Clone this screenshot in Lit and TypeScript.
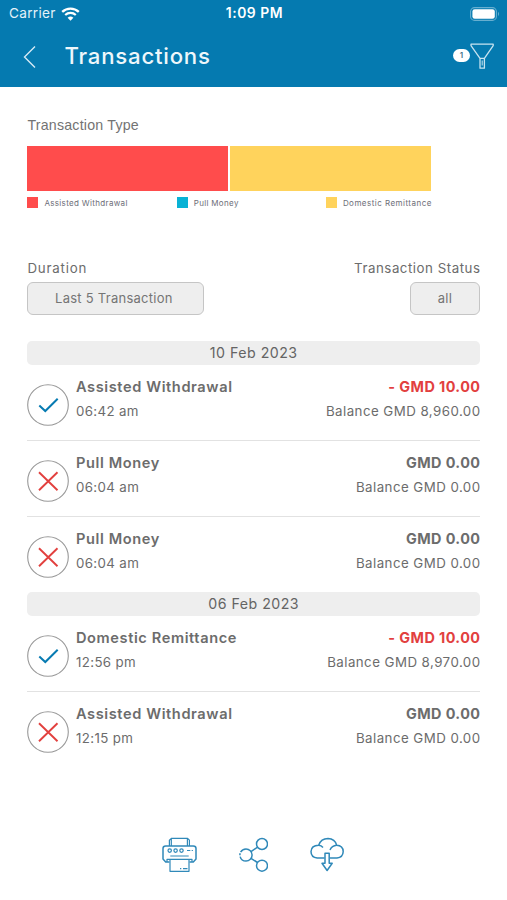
import { LitElement, html, css, svg } from "lit";
import { customElement, property } from "lit/decorators.js";
import { classMap } from "lit/directives/class-map.js";

interface Transaction {
  name: string;
  time: string;
  amount: string;
  balance: string;
  ok: boolean;
}

interface Day {
  date: string;
  items: Transaction[];
}

const DAYS: Day[] = [
  {
    date: "10 Feb 2023",
    items: [
      { name: "Assisted Withdrawal", time: "06:42 am", amount: "- GMD 10.00", balance: "Balance GMD 8,960.00", ok: true },
      { name: "Pull Money", time: "06:04 am", amount: "GMD 0.00", balance: "Balance GMD 0.00", ok: false },
      { name: "Pull Money", time: "06:04 am", amount: "GMD 0.00", balance: "Balance GMD 0.00", ok: false },
    ],
  },
  {
    date: "06 Feb 2023",
    items: [
      { name: "Domestic Remittance", time: "12:56 pm", amount: "- GMD 10.00", balance: "Balance GMD 8,970.00", ok: true },
      { name: "Assisted Withdrawal", time: "12:15 pm", amount: "GMD 0.00", balance: "Balance GMD 0.00", ok: false },
    ],
  },
];

@customElement("app-header")
class AppHeader extends LitElement {
  static styles = css`
    :host { display: flex; flex-direction: column; height: 86.5px; background: #057ab0; color: #fff; }
    svg { display: block; fill: none; flex: none; }
    .status { display: grid; grid-template-columns: 1fr auto 1fr; align-items: center; height: 27px; padding: 0 7px 0 9px; font-size: 13.6px; line-height: 27px; }
    .carrier { display: flex; align-items: center; gap: 5.5px; letter-spacing: 0.3px; color: #e4f2f9; }
    .clock { font-weight: 600; font-size: 13.9px; letter-spacing: 0.55px; }
    .battery { justify-self: end; }
    .bar { display: flex; align-items: center; height: 59px; padding: 0 13px 0 23px; }
    .title { flex: 1; margin: -1px 0 0 27.5px; font-size: 22.2px; font-weight: 500; line-height: 30px; letter-spacing: 0.78px; color: #eef7fb; }
    .badge { box-sizing: border-box; width: 17px; height: 13px; margin-top: -2px; border-radius: 7px; background: #fff; color: #42708a; font-size: 8px; line-height: 13px; text-align: center; font-weight: 600; }
  `;
  render() {
    return html`
      <div class="status">
        <span class="carrier">Carrier
          <svg width="19" height="14" viewBox="0 0 19 14">
            <path d="M1.2 4.9a12 12 0 0 1 16.6 0" stroke="#fff" stroke-width="2.3" />
            <path d="M4.2 8a7.7 7.7 0 0 1 10.6 0" stroke="#fff" stroke-width="2.2" />
            <path d="M6.6 10.7a4.3 4.3 0 0 1 5.8 0L9.5 13.7z" fill="#fff" />
          </svg>
        </span>
        <span class="clock">1:09 PM</span>
        <svg class="battery" width="30" height="14" viewBox="0 0 30 14">
          <rect x=".6" y=".6" width="25.8" height="12.8" rx="4" stroke="#67afd0" stroke-width="1.1" />
          <rect x="2.4" y="2.3" width="22.4" height="9.4" rx="2.3" fill="#fff" />
          <path d="M28 4.8q2 2.2 0 4.4z" fill="#67afd0" />
        </svg>
      </div>
      <div class="bar">
        <svg width="14" height="24" viewBox="0 0 14 24"><path d="M12 1.5 1.5 12 12 22.5" stroke="#d5eaf5" stroke-width="1.4" /></svg>
        <h1 class="title">Transactions</h1>
        <span class="badge">1</span>
        <svg width="24" height="27" viewBox="0 0 24 27" stroke="#c7e3f0" stroke-width="1.3" stroke-linejoin="round">
          <path d="M1 1.2H23.2V2.6L14.4 15.3V25.2H10V15.3L1 2.6zM10 15.4h4.4" />
          <path d="M12.2 17.5v5" stroke-width="1" />
        </svg>
      </div>
    `;
  }
}

@customElement("type-chart")
class TypeChart extends LitElement {
  static styles = css`
    :host { display: block; width: 405px; }
    .heading { margin: 0; font: 400 14.2px/18px "Liberation Sans", Arial, sans-serif; letter-spacing: 0.22px; color: #737373; }
    .bars { display: flex; gap: 2px; height: 45px; margin-top: 11.5px; width: 404px; }
    .bar { flex: 1; }
    .red { background: #ff4c4c; }
    .cyan { background: #09b2d5; }
    .yellow { background: #ffd35c; }
    .legend { display: grid; grid-template-columns: 149.3px 149.2px auto; margin-top: 6.5px; }
    .key { display: flex; align-items: center; gap: 6px; height: 11px; font-size: 8px; color: #6d6e78; white-space: nowrap; letter-spacing: 0.33px; }
    .key:last-child { letter-spacing: 0.47px; }
    .swatch { width: 11px; height: 11px; }
  `;
  render() {
    const keys = [["red", "Assisted Withdrawal"], ["cyan", "Pull Money"], ["yellow", "Domestic Remittance"]];
    return html`
      <h2 class="heading">Transaction Type</h2>
      <div class="bars"><div class="bar red"></div><div class="bar yellow"></div></div>
      <div class="legend">
        ${keys.map(([c, label]) => html`<span class="key"><i class="swatch ${c}"></i>${label}</span>`)}
      </div>
    `;
  }
}

@customElement("transaction-row")
class TransactionRow extends LitElement {
  @property({ attribute: false }) item!: Transaction;
  @property({ type: Boolean }) last = false;

  static styles = css`
    :host { display: block; }
    .row { box-sizing: border-box; display: flex; height: 76px; border-bottom: 1px solid #e2e2e2; }
    .row.last { height: 75px; border-bottom: 0; }
    .mark { display: block; flex: none; margin: 19px 6.6px 0 0; fill: none; }
    .text { display: flex; flex: 1; flex-direction: column; padding-top: 10px; white-space: nowrap; }
    .end { align-items: flex-end; }
    .name, .amount { font-size: 14.6px; line-height: 24px; font-weight: 600; color: #6c6c6c; letter-spacing: 0.6px; }
    .amount { font-weight: 700; font-size: 14.4px; letter-spacing: 0.42px; margin-right: -0.4px; }
    .debit { color: #e2403e; }
    .time, .balance { font-size: 13.3px; line-height: 24px; color: #6c6c6c; letter-spacing: 0.36px; }
    .balance { letter-spacing: 0.45px; margin-right: -0.5px; }
  `;
  render() {
    const { name, time, amount, balance, ok } = this.item;
    return html`
      <div class=${classMap({ row: true, last: this.last })}>
        <svg class="mark" width="42" height="42" viewBox="0 0 42 42">
          <circle cx="21" cy="21" r="20.3" stroke="#999" stroke-width="1.1" />
          ${ok
            ? svg`<path d="M12.3 21.4l6 5.6L30.7 14.8" stroke="#077bb2" stroke-width="2" />`
            : svg`<path d="M12 12.2 30.5 30.2M30.5 12.2 12 30.2" stroke="#e2403e" stroke-width="1.9" />`}
        </svg>
        <div class="text"><span class="name">${name}</span><span class="time">${time}</span></div>
        <div class="text end">
          <span class=${classMap({ amount: true, debit: amount.startsWith("-") })}>${amount}</span>
          <span class="balance">${balance}</span>
        </div>
      </div>
    `;
  }
}

@customElement("action-bar")
class ActionBar extends LitElement {
  static styles = css`
    :host { display: flex; justify-content: center; align-items: center; gap: 41.5px; height: 36px; padding-right: 2px; }
    svg { display: block; fill: none; stroke: #3089b9; stroke-width: 1.5; stroke-linejoin: round; }
    .thin { stroke-width: 1.2; }
  `;
  render() {
    return html`
      <svg width="35" height="36" viewBox="0 0 35 36">
        <path d="M7.4 9V3.2L9.6 1.3H25.6L27.4 3.2V9M9.3 1.5V9M25.4 1.5V9" class="thin" />
        <path d="M7.5 25H3.7L1 22V11.5Q1 9 3.7 9H31.3Q34 9 34 11.5V22L31.3 25H27.5" />
        <path d="M5 25V22.3H30V25M8 22.5V34.3H27V22.5" class="thin" />
        <g class="thin"><circle cx="7.7" cy="13.6" r="1.7" /><circle cx="13.6" cy="13.6" r="1.7" /><circle cx="19.5" cy="13.6" r="1.7" />
        <path d="M25 13.5h3.3M29.7 13.5h1.2M8.3 19H26.7M18 31.7h1.3M21 31.7h4.5" /></g>
      </svg>
      <svg width="30" height="36" viewBox="0 0 30 36">
        <circle cx="8" cy="18" r="6.1" stroke-dasharray="17 1.5 2 1.2 20" /><circle cx="24" cy="7" r="5.5" /><circle cx="24" cy="28.7" r="5.5" />
        <path d="M13 14.6 19.5 10.2M13 21.3 19.5 25.5" />
      </svg>
      <svg width="34" height="36" viewBox="0 0 34 36">
        <path d="M14.6 21H7.2Q1 20.3 1 14.5 1.3 8.3 8.7 8.2 11 1.6 18 1.6 25 2 26.7 8.3 33 8.6 33.2 14.5 33 20.5 27 21H20" />
        <path d="M8.7 8.2Q11.3 8.5 13 10.4M20 13Q21.8 8.8 26.7 8.3" />
        <path d="M15 16.2H19.2V26.3H22.2L17.1 33.5 12 26.3H15z" />
      </svg>
    `;
  }
}

@customElement("app-root")
class AppRoot extends LitElement {
  static styles = css`
    :host { display: flex; flex-direction: column; height: 900px; overflow: hidden; background: #fff; font-family: Inter, "Open Sans", sans-serif; color: #6c6c6c; }
    .content { flex: 1; padding: 29.5px 27px 0 27.4px; }
    .filters { display: flex; justify-content: space-between; margin-top: 49.5px; }
    .filter { display: flex; flex-direction: column; gap: 4px; }
    .filter:last-child { align-items: flex-end; }
    .label { font-size: 13.3px; line-height: 20px; letter-spacing: 0.8px; }
    .label.status { letter-spacing: 0.52px; margin-right: -0.5px; }
    .pick { box-sizing: border-box; height: 33px; border: 1.3px solid #c5c5c5; border-radius: 6px; background: #eee; font: inherit; font-size: 13px; letter-spacing: 0.26px; color: #757575; padding: 0; }
    .duration { width: 177px; padding-right: 4px; }
    .all { width: 70px; }
    .days { display: block; margin-top: 26px; }
    .date { margin: 0; height: 24px; border-radius: 5px; background: #eee; font-size: 14.2px; line-height: 24px; font-weight: 400; letter-spacing: 0.48px; text-align: center; color: #646464; }
    action-bar { margin-bottom: 27px; }
  `;
  render() {
    return html`
      <app-header></app-header>
      <div class="content">
        <type-chart></type-chart>
        <div class="filters">
          <div class="filter"><span class="label">Duration</span><button class="pick duration">Last 5 Transaction</button></div>
          <div class="filter"><span class="label status">Transaction Status</span><button class="pick all">all</button></div>
        </div>
        <div class="days">
          ${DAYS.map((day) => html`
            <h3 class="date">${day.date}</h3>
            ${day.items.map((item, i) => html`<transaction-row .item=${item} ?last=${i === day.items.length - 1}></transaction-row>`)}
          `)}
        </div>
      </div>
      <action-bar></action-bar>
    `;
  }
}
